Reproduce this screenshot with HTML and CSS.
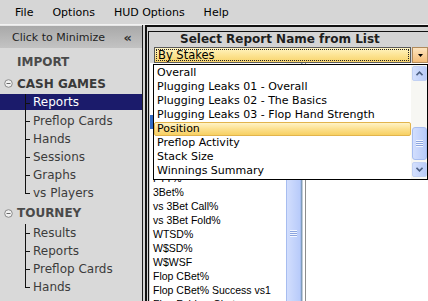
FILE: index.html
```html
<!DOCTYPE html>
<html>
<head>
<meta charset="utf-8">
<link rel="stylesheet" href="styles.css">
</head>
<body>
<div class="app">
  <div class="menubar"><span>File</span><span>Options</span><span>HUD Options</span><span>Help</span></div>
  <div class="main">
    <aside class="sidebar">
      <div class="minimize"><span>Click to Minimize</span><span class="chev">«</span></div>
      <div class="tree">
        <div class="head">IMPORT</div>
        <div class="head cash"><svg width="9" height="9" viewBox="0 0 9 9"><circle cx="4.5" cy="4.5" r="3.8" fill="#f2f2f2" stroke="#8a8a8a" stroke-width="1"/><line x1="2.5" y1="4.5" x2="6.5" y2="4.5" stroke="#6a6a6a" stroke-width="1"/></svg>CASH GAMES</div>
        <ul class="children">
          <li class="sel">Reports</li>
          <li>Preflop Cards</li>
          <li>Hands</li>
          <li>Sessions</li>
          <li>Graphs</li>
          <li>vs Players</li>
        </ul>
        <div class="head"><svg width="9" height="9" viewBox="0 0 9 9"><circle cx="4.5" cy="4.5" r="3.8" fill="#f2f2f2" stroke="#8a8a8a" stroke-width="1"/><line x1="2.5" y1="4.5" x2="6.5" y2="4.5" stroke="#6a6a6a" stroke-width="1"/></svg>TOURNEY</div>
        <ul class="children">
          <li>Results</li>
          <li>Reports</li>
          <li>Preflop Cards</li>
          <li>Hands</li>
        </ul>
      </div>
    </aside>
    <section class="content">
      <div class="frame">
        <div class="frame-inner">
          <div class="report">
            <div class="title">Select Report Name from List</div>
            <div class="select">
              <div class="sel-value"><span class="focus">By Stakes</span></div>
              <div class="sel-btn"><svg width="5" height="3" viewBox="0 0 5 3"><polygon points="0,0 5,0 2.5,3" fill="#000"/></svg></div>
            </div>
          </div>
          <div class="lower">
            <div class="listbox">
              <ul class="stats">
                <li class="blank"></li>
                <li class="blank"></li>
                <li class="blank"></li>
                <li class="blank cur"></li>
                <li class="blank"></li>
                <li class="blank"></li>
                <li class="blank"></li>
                <li>FTT%</li>
                <li>3Bet%</li>
                <li>vs 3Bet Call%</li>
                <li>vs 3Bet Fold%</li>
                <li>WTSD%</li>
                <li>W$SD%</li>
                <li>W$WSF</li>
                <li>Flop CBet%</li>
                <li>Flop CBet% Success vs1</li>
                <li>Flop Fold vs Cbet</li>
              </ul>
              <div class="vscroll"><div class="thumb"><span class="grip"></span></div></div>
            </div>
            <div class="splitter"></div>
            <div class="pane"></div>
          </div>
        </div>
      </div>
      <div class="popup">
        <ul class="options">
          <li>Overall</li>
          <li>Plugging Leaks 01 - Overall</li>
          <li>Plugging Leaks 02 - The Basics</li>
          <li>Plugging Leaks 03 - Flop Hand Strength</li>
          <li class="hi">Position</li>
          <li>Preflop Activity</li>
          <li>Stack Size</li>
          <li>Winnings Summary</li>
        </ul>
        <div class="pscroll">
          <div class="sbtn"><svg width="7" height="5" viewBox="0 0 7 5"><polyline points="0.5,4.2 3.5,1.2 6.5,4.2" fill="none" stroke="#4d6185" stroke-width="1.6"/></svg></div>
          <div class="pthumb"><span class="grip"></span></div>
          <div class="sbtn down"><svg width="7" height="5" viewBox="0 0 7 5"><polyline points="0.5,0.8 3.5,3.8 6.5,0.8" fill="none" stroke="#4d6185" stroke-width="1.6"/></svg></div>
        </div>
      </div>
    </section>
  </div>
</div>
</body>
</html>
```
FILE: styles.css
```css
* { box-sizing: border-box; margin: 0; padding: 0; }
html, body { width: 428px; height: 301px; overflow: hidden; }
body { font-family: "DejaVu Sans", sans-serif; font-size: 11px; color: #000; background: #d4d4d4; }

.app { display: flex; flex-direction: column; height: 301px; }

.menubar { height: 25px; flex: none; display: flex; align-items: center; gap: 19px; padding: 1px 0 0 15px; background: #d6d6d6; border-bottom: 1px solid #f2f2f2; }

.main { flex: 1; display: flex; min-height: 0; }

.sidebar { width: 143px; flex: none; background: #d9d9d9; border-right: 1px solid #1e1e1e; display: flex; flex-direction: column; }
.minimize { height: 23px; flex: none; display: flex; align-items: center; justify-content: space-between; padding: 0 10px 0 12px; background: linear-gradient(#a9a9a9, #c3c3c3); border-top: 1px solid #e6e6e6; color: #1e1e1e; }
.chev { font-size: 13px; font-weight: bold; color: #333; }
.tree { padding-top: 3px; }
.head { height: 22px; display: flex; align-items: center; padding-left: 17px; font-weight: bold; font-size: 12px; color: #4a4a4a; }
.head svg { margin-left: -13px; margin-right: 4px; flex: none; }
.head.cash { height: 21px; color: #3a3a3a; }
.children { list-style: none; }
.children li { position: relative; height: 18px; line-height: 18px; padding-left: 33px; font-size: 12px; color: #3c3c3c; white-space: nowrap; }
.children li::before { content: ""; position: absolute; left: 25px; top: 0; bottom: 0; width: 1px; background: #111; }
.children li:last-child::before { bottom: 9px; }
.children li::after { content: ""; position: absolute; left: 25px; top: 9px; width: 5px; height: 1px; background: #111; }
.children li.sel { background: linear-gradient(#1b1b6b, #1b1b6b) 0 0 / 100% 16px no-repeat; color: #fff; line-height: 16px; }

.content { flex: 1; position: relative; padding-left: 2px; background: #d4d4d4; display: flex; flex-direction: column; min-width: 0; }
.frame { flex: 1; display: flex; flex-direction: column; min-height: 0; border-top: 2px solid #111; border-left: 2px solid #111; padding: 4px 0 0 1px; }
.frame-inner { flex: 1; display: flex; flex-direction: column; min-height: 0; border-top: 1px solid #111; border-left: 1px solid #111; }

.report { padding-left: 5px; flex: none; }
.title { height: 15px; line-height: 15px; padding-left: 26px; font-weight: bold; font-size: 12px; color: #1e1e1e; white-space: nowrap; }
.select { height: 16px; display: flex; }
.sel-value { flex: 1; border: 1px solid #5a5a5a; background: linear-gradient(#fff4c2, #fde494 50%, #f8d46c); padding: 1px; }
.focus { display: block; height: 12px; border: 1px dotted #222; padding-left: 1px; line-height: 10px; font-size: 11.5px; }
.sel-btn { width: 16px; flex: none; margin-left: 1px; border: 1px solid #b08a5c; background: linear-gradient(#fde4bf, #f5bd78); display: flex; align-items: center; justify-content: center; }

.lower { flex: 1; display: flex; padding-left: 1px; min-height: 0; }
.listbox { width: 152px; flex: none; display: flex; background: #fff; border-right: 1px solid #7f9db9; }
.stats { flex: 1; list-style: none; padding: 10px 0 0 3px; font-family: "Liberation Sans", Arial, sans-serif; font-size: 10.5px; white-space: nowrap; overflow: hidden; }
.stats li { height: 14px; line-height: 14px; }
.stats li.cur { background: #316ac5; margin-left: -3px; }
.vscroll { width: 15px; flex: none; background: #f3f3ee; overflow: hidden; }
.thumb { display: flex; justify-content: center; margin-top: 101px; height: 150px; padding-top: 65px; border: 1px solid #a7bdf0; border-radius: 3px; background: linear-gradient(to right, #d2defd, #b8cbfa); }
.grip { display: block; width: 7px; height: 7px; background: repeating-linear-gradient(#f2f6ff 0 1px, #8ca5df 1px 2px); }
.splitter { width: 4px; flex: none; background: #fff; border-left: 1px solid #c4ccd8; border-right: 1px solid #8c8c8c; }
.pane { flex: 1; background: #fff; }

.popup { position: absolute; left: 10px; top: 39px; right: 0; height: 116px; border: 1px solid #000; background: #fff; display: flex; }
.options { flex: 1; list-style: none; padding-top: 1px; white-space: nowrap; overflow: hidden; }
.options li { height: 14px; line-height: 14px; padding-left: 3px; }
.options li.hi { background: linear-gradient(#fff3c6, #fce08e 50%, #f7d062); border: 1px solid #e2b44c; border-radius: 2px; line-height: 12px; padding-left: 2px; }
.pscroll { width: 16px; flex: none; display: flex; flex-direction: column; padding: 1px 0 0 1px; background: #f7f7f3; }
.sbtn { height: 15px; width: 15px; flex: none; border: 1px solid #c2d1f3; border-radius: 2px; background: linear-gradient(to right, #d4e0fd, #b9cbf8); display: flex; align-items: center; justify-content: center; }
.sbtn.down { margin-top: 2px; }
.pthumb { height: 33px; width: 15px; flex: none; margin-top: 46px; border: 1px solid #a7bdf0; border-radius: 3px; background: linear-gradient(to right, #d2defd, #b8cbfa); display: flex; align-items: center; justify-content: center; }
```
